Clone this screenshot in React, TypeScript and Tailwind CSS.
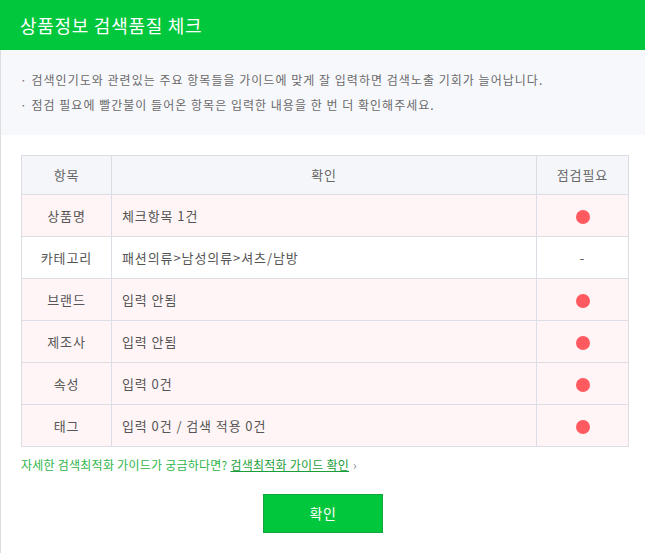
import React from 'react'

type Row = {
  label: string
  value: string
  needCheck: boolean
}

const rows: Row[] = [
  { label: '상품명', value: '체크항목 1건', needCheck: true },
  { label: '카테고리', value: '패션의류>남성의류>셔츠/남방', needCheck: false },
  { label: '브랜드', value: '입력 안됨', needCheck: true },
  { label: '제조사', value: '입력 안됨', needCheck: true },
  { label: '속성', value: '입력 0건', needCheck: true },
  { label: '태그', value: '입력 0건 / 검색 적용 0건', needCheck: true },
]

export default function App() {
  return (
    <div
      className="w-[645px] h-[553px] bg-white overflow-hidden"
      style={{ fontFamily: '"Noto Sans CJK KR", "Noto Sans", sans-serif' }}
    >
      {/* Header */}
      <div className="h-[50px] bg-[#00c73c] flex items-center pl-5">
        <h1 className="text-[18px] text-white font-normal tracking-[0.04em]">상품정보 검색품질 체크</h1>
      </div>

      <div className="border-l border-[#dddddd] h-[503px]">
        {/* Notice box */}
        <div className="bg-[#f7f8fc] h-[85px] pt-[17px] pl-[19px] text-[12px] text-[#6a6a6a] tracking-[0.085em]">
          <p className="leading-[25px]">· 검색인기도와 관련있는 주요 항목들을 가이드에 맞게 잘 입력하면 검색노출 기회가 늘어납니다.</p>
          <p className="leading-[25px]">· 점검 필요에 빨간불이 들어온 항목은 입력한 내용을 한 번 더 확인해주세요.</p>
        </div>

        {/* Table */}
        <div className="pt-5 pl-5 pr-4">
          <table className="w-[608px] border-collapse text-[13px] text-[#555555] tracking-[0.07em]">
            <thead>
              <tr className="h-[39px] bg-[#f5f6fa] text-[#666666]">
                <th className="w-[90px] border border-[#dddde5] font-normal">항목</th>
                <th className="border border-[#dddde5] font-normal">확인</th>
                <th className="w-[92px] border border-[#dddde5] font-normal">점검필요</th>
              </tr>
            </thead>
            <tbody>
              {rows.map((row) => (
                <tr key={row.label} className={`h-[42px] ${row.needCheck ? 'bg-[#fff5f6]' : 'bg-white'}`}>
                  <td className="border border-[#dddde5] text-center">{row.label}</td>
                  <td className="border border-[#dddde5] pl-[10px]">{row.value}</td>
                  <td className="border border-[#dddde5] text-center">
                    {row.needCheck ? (
                      <span className="inline-block w-[14px] h-[14px] rounded-full bg-[#ff5a5f] align-middle" />
                    ) : (
                      <span>-</span>
                    )}
                  </td>
                </tr>
              ))}
            </tbody>
          </table>

          {/* Guide link */}
          <p className="mt-[11px] text-[12px] leading-[14px] text-[#2fb54a] tracking-[0.02em]">
            자세한 검색최적화 가이드가 궁금하다면?{' '}
            <a href="#" className="underline text-[#1a9e3a]">검색최적화 가이드 확인</a>
            <span className="ml-1 text-[#888888]">›</span>
          </p>

          {/* Confirm button */}
          <div className="flex justify-center mt-[22px] pr-[4px]">
            <button className="w-[120px] h-[39px] bg-[#00c73c] border border-[#12a73e] text-white text-[14px] tracking-[0.05em]">
              확인
            </button>
          </div>
        </div>
      </div>
    </div>
  )
}
